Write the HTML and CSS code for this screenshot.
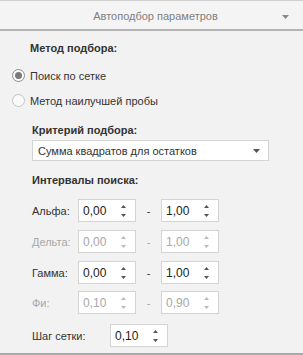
FILE: index.html
```html
<!DOCTYPE html>
<html lang="ru">
<head>
<meta charset="UTF-8">
<title>Автоподбор параметров</title>
<link rel="stylesheet" href="styles.css">
</head>
<body>
<div class="panel">
    <div class="panel-header">
        <span class="panel-title">Автоподбор параметров</span>
        <svg class="header-arrow" width="7" height="4" viewBox="0 0 7 4"><path d="M0 0H7L3.5 4Z" fill="#8a8a8a"/></svg>
    </div>

    <div class="section-title method-title">Метод подбора:</div>
    <label class="radio-row">
        <span class="radio checked"></span> Поиск по сетке
    </label>
    <label class="radio-row">
        <span class="radio"></span> Метод наилучшей пробы
    </label>

    <div class="group">
        <div class="section-title crit-title">Критерий подбора:</div>
        <div class="combo">
            <span>Сумма квадратов для остатков</span>
            <svg width="7" height="4" viewBox="0 0 7 4"><path d="M0 0H7L3.5 4Z" fill="#555"/></svg>
        </div>

        <div class="section-title interval-title">Интервалы поиска:</div>

        <div class="range-row first">
            <span class="range-label">Альфа:</span>
            <div class="spin"><span>0,00</span><span class="spin-arrows"><svg width="7" height="14" viewBox="0 0 7 14"><path d="M3.5 1L6 4H1Z M1 10H6L3.5 13Z" fill="#555"/></svg></span></div>
            <span class="dash">-</span>
            <div class="spin"><span>1,00</span><span class="spin-arrows"><svg width="7" height="14" viewBox="0 0 7 14"><path d="M3.5 1L6 4H1Z M1 10H6L3.5 13Z" fill="#555"/></svg></span></div>
        </div>
        <div class="range-row disabled">
            <span class="range-label">Дельта:</span>
            <div class="spin"><span>0,00</span><span class="spin-arrows"><svg width="7" height="14" viewBox="0 0 7 14"><path d="M3.5 1L6 4H1Z M1 10H6L3.5 13Z" fill="#bbb"/></svg></span></div>
            <span class="dash">-</span>
            <div class="spin"><span>1,00</span><span class="spin-arrows"><svg width="7" height="14" viewBox="0 0 7 14"><path d="M3.5 1L6 4H1Z M1 10H6L3.5 13Z" fill="#bbb"/></svg></span></div>
        </div>
        <div class="range-row">
            <span class="range-label">Гамма:</span>
            <div class="spin"><span>0,00</span><span class="spin-arrows"><svg width="7" height="14" viewBox="0 0 7 14"><path d="M3.5 1L6 4H1Z M1 10H6L3.5 13Z" fill="#555"/></svg></span></div>
            <span class="dash">-</span>
            <div class="spin"><span>1,00</span><span class="spin-arrows"><svg width="7" height="14" viewBox="0 0 7 14"><path d="M3.5 1L6 4H1Z M1 10H6L3.5 13Z" fill="#555"/></svg></span></div>
        </div>
        <div class="range-row disabled short">
            <span class="range-label">Фи:</span>
            <div class="spin"><span>0,10</span><span class="spin-arrows"><svg width="7" height="14" viewBox="0 0 7 14"><path d="M3.5 1L6 4H1Z M1 10H6L3.5 13Z" fill="#bbb"/></svg></span></div>
            <span class="dash">-</span>
            <div class="spin"><span>0,90</span><span class="spin-arrows"><svg width="7" height="14" viewBox="0 0 7 14"><path d="M3.5 1L6 4H1Z M1 10H6L3.5 13Z" fill="#bbb"/></svg></span></div>
        </div>

        <div class="step-row">
            <span class="step-label">Шаг сетки:</span>
            <div class="spin"><span>0,10</span><span class="spin-arrows"><svg width="7" height="14" viewBox="0 0 7 14"><path d="M3.5 1L6 4H1Z M1 10H6L3.5 13Z" fill="#555"/></svg></span></div>
        </div>
    </div>
</div>
</body>
</html>
```

FILE: styles.css
```css
/* panel with DevExpress-like look */
body {
    margin: 0;
    background-color: #f2f2f2;
    font-family: "Liberation Sans", Arial, sans-serif;
    font-size: 11px;
    color: #333;
}
.panel {
    width: 303px;
    height: 353px;
    border-bottom: 2px solid #a9a9a9;
    background-color: #f2f2f2;
}
.panel-header {
    position: relative;
    height: 28px;
    border-top: 1px solid #cfcfcf;
    border-bottom: 2px solid #b4b4b4;
    background-color: #f4f4f4;
    display: flex;
    align-items: center;
    justify-content: center;
    padding-left: 8px;
}
.panel-title {
    color: #808080;
    font-size: 11px;
    margin-top: 2px;
}
.header-arrow {
    position: absolute;
    right: 14px;
    top: 14px;
}
.section-title {
    font-weight: bold;
    color: #333;
    line-height: 16px;
    height: 16px;
}
.method-title {
    margin: 9px 0 0 30px;
}
.radio-row {
    display: flex;
    align-items: center;
    height: 25px;
    padding-left: 12px;
    gap: 5px;
}
.radio-row:first-of-type {
    margin-top: 7px;
}
.radio {
    width: 11px;
    height: 11px;
    border: 1px solid #c4c4c4;
    border-radius: 50%;
    background-color: #fafafa;
    box-sizing: content-box;
    position: relative;
}
.radio.checked {
    border-color: #8c8c8c;
    background-color: #fff;
}
.radio.checked::after {
    content: "";
    position: absolute;
    left: 2px;
    top: 2px;
    width: 7px;
    height: 7px;
    border-radius: 50%;
    background-color: #7a7a7a;
}
.group {
    padding-left: 32px;
}
.crit-title {
    margin-top: 9px;
}
.combo {
    margin-top: 2px;
    width: 237px;
    height: 21px;
    box-sizing: border-box;
    border: 1px solid #d4d4d4;
    background-color: #fff;
    display: flex;
    align-items: center;
    justify-content: space-between;
    padding: 0 8px 0 5px;
}
.interval-title {
    margin-top: 11px;
}
.range-row {
    display: flex;
    align-items: center;
    margin-top: 8px;
    height: 23px;
}
.range-row.first {
    margin-top: 11px;
}
.range-row.short {
    margin-top: 7px;
    height: 23px;
}
.range-label {
    width: 46px;
}
.dash {
    width: 25px;
    text-align: center;
}
.spin {
    width: 58px;
    height: 23px;
    box-sizing: border-box;
    border: 1px solid #d4d4d4;
    background-color: #fff;
    display: flex;
    align-items: center;
    justify-content: space-between;
    padding: 0 8px 0 4px;
    color: #222;
    font-size: 12px;
}
.spin-arrows {
    display: flex;
}
.disabled .range-label,
.disabled .dash,
.disabled .spin {
    color: #a8a8a8;
}
.step-row {
    display: flex;
    align-items: center;
    margin-top: 10px;
}
.step-label {
    width: 78px;
}
```
